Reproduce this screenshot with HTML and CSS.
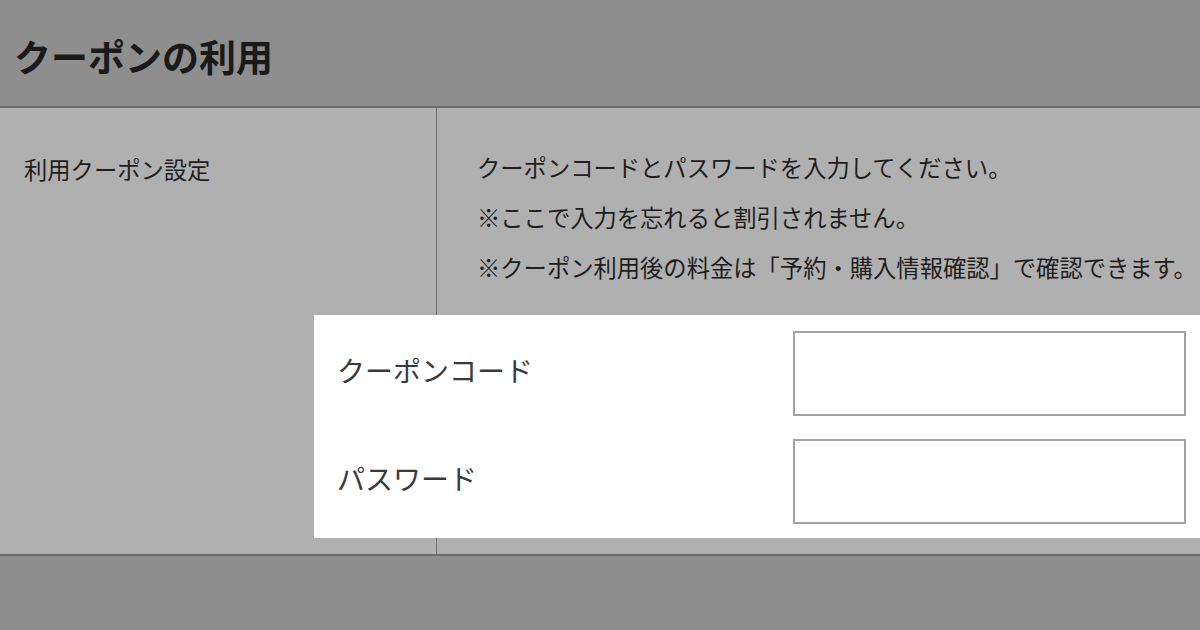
FILE: index.html
```html
<!DOCTYPE html>
<html lang="ja">
<head>
<meta charset="utf-8">
<title>クーポンの利用</title>
<link rel="stylesheet" href="styles.css">
</head>
<body>
<header class="page-head">
  <h1 class="page-title">クーポンの利用</h1>
</header>
<section class="row">
  <div class="row-label">利用クーポン設定</div>
  <div class="row-body">
    <p class="note">クーポンコードとパスワードを入力してください。</p>
    <p class="note">※ここで入力を忘れると割引されません。</p>
    <p class="note">※クーポン利用後の料金は「予約・購入情報確認」で確認できます。</p>
    <div class="coupon-form">
      <div class="field">
        <label class="field-label" for="code">クーポンコード</label>
        <input class="field-input" id="code" type="text">
      </div>
      <div class="field">
        <label class="field-label" for="pass">パスワード</label>
        <input class="field-input" id="pass" type="password">
      </div>
    </div>
  </div>
</section>
</body>
</html>
```

FILE: styles.css
```css
* { box-sizing: border-box; }

html, body {
  margin: 0;
  padding: 0;
}

body {
  width: 1200px;
  height: 630px;
  overflow: hidden;
  background: #8e8e8e;
  font-family: "Noto Sans CJK JP", "Noto Sans", sans-serif;
  color: #1e1e1e;
}

.page-head {
  height: 108px;
  padding: 6px 0 0 14px;
  display: flex;
  align-items: center;
  background: #8e8e8e;
  border-bottom: 2px solid #6c6c6c;
}

.page-title {
  margin: 0;
  font-size: 37px;
  font-weight: 700;
  line-height: 1;
  color: #1a1a1a;
}

.row {
  display: flex;
  background: #b0b0b0;
  border-bottom: 2px solid #6c6c6c;
}

.row-label {
  width: 437px;
  flex: none;
  padding: 36px 0 0 24px;
  border-right: 1px solid #707070;
  font-size: 23.3px;
  line-height: 50px;
}

.row-body {
  flex: 1;
  min-width: 0;
  padding: 34px 0 16px 40px;
}

.note {
  margin: 0;
  font-size: 23.3px;
  line-height: 50px;
  white-space: nowrap;
}

.coupon-form {
  margin: 23px 0 0 -163px;
  padding: 16px 14px 14px 23px;
  background: #ffffff;
  display: flex;
  flex-direction: column;
  gap: 23px;
}

.field {
  display: flex;
  align-items: center;
}

.field-label {
  width: 456px;
  flex: none;
  padding-bottom: 5px;
  font-size: 28px;
  color: #3a3a3a;
  line-height: 1.2;
}

.field-input {
  width: 393px;
  height: 85px;
  margin: 0;
  padding: 0 12px;
  border: 2px solid #a2a2a2;
  border-radius: 0;
  background: #ffffff;
  outline: none;
  font-size: 24px;
}
```
